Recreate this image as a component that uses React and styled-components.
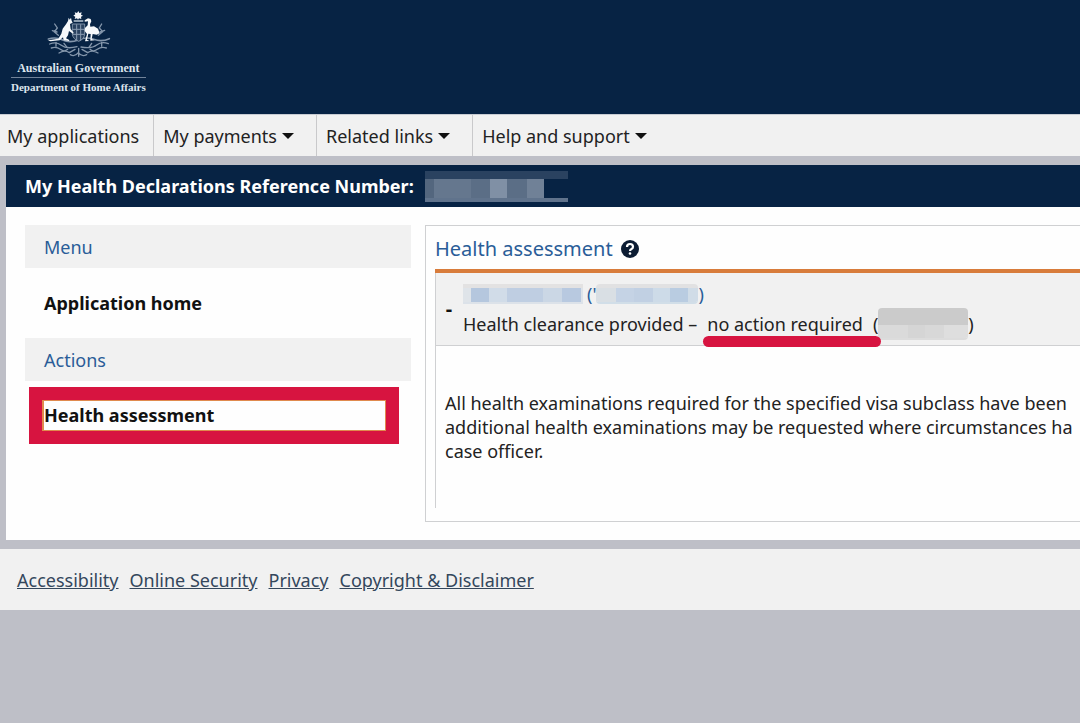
import React from "react";
import styled, { createGlobalStyle } from "styled-components";

const navy = "#072344";
const blue = "#2a5d98";
const red = "#d71440";
const pale = "#f1f1f1";

const GlobalStyle = createGlobalStyle`
  * { box-sizing: border-box; }
  body {
    margin: 0;
    background: #bebfc7;
    color: #222;
    font-family: "Noto Sans", "Open Sans", sans-serif;
    font-size: 18px;
    line-height: 24px;
    overflow-x: hidden;
  }
`;

const Header = styled.header`
  display: flex;
  padding: 10px 11px 18px;
  background: ${navy};
`;

const Brand = styled.div`
  display: flex;
  flex-direction: column;
  align-items: center;
  color: #dde5ee;
  font: bold 11px/18px "Liberation Serif", serif;
  white-space: nowrap;
`;

const BrandLine = styled.span`
  width: 100%;
  text-align: center;
  font-size: ${(p) => (p.$ruled ? 12 : 11)}px;
  border-bottom: ${(p) => (p.$ruled ? "1px solid #71839a" : "0")};
`;

const Nav = styled.nav`
  display: flex;
  height: 42px;
  background: ${pale};
  border-top: 1px solid #c8ccd3;
`;

const navItem = `
  display: flex;
  align-items: center;
  gap: 5px;
  border: 0;
  background: none;
  color: #222;
  font: inherit;
  text-decoration: none;
  white-space: nowrap;
`;

const NavLink = styled.a`
  ${navItem}
  padding: 0 14px 0 7px;
`;

const NavButton = styled.button`
  ${navItem}
  padding: 0 22px 0 9px;
  border-left: 1px solid #c9c9cb;
`;

const Caret = styled.span`
  border: 6px solid transparent;
  border-top-color: #111;
  border-bottom: 0;
`;

const Main = styled.main`
  margin: 9px 0 9px 6px;
  background: #fefefe;
`;

const TitleBar = styled.div`
  display: flex;
  align-items: center;
  gap: 11px;
  height: 42px;
  padding-left: 19px;
  background: ${navy};
`;

const Title = styled.h1`
  margin: 0;
  color: #fff;
  font-size: 18px;
  line-height: 24px;
  white-space: nowrap;
`;

const Columns = styled.div`
  display: flex;
  gap: 14px;
  padding: 18px 0 18px 19px;
`;

const Sidebar = styled.nav`
  flex: 0 0 386px;
`;

const MenuHeading = styled.h2`
  margin: 0;
  padding: 10px 19px 9px;
  background: ${pale};
  color: ${blue};
  font-size: 18px;
  font-weight: 400;
  line-height: 24px;
`;

const MenuLink = styled.a`
  display: block;
  padding: 23px 19px;
  color: #111;
  font-weight: 700;
  text-decoration: none;
`;

const Highlight = styled.div`
  margin: 6px 12px 0 4px;
  border: 13px solid ${red};
`;

const ActiveLink = styled.a`
  display: block;
  padding: 2px 0 3px;
  border: 1px solid #e08a4e;
  border-left-width: 2px;
  color: #111;
  font-weight: 700;
  text-decoration: none;
`;

const Panel = styled.section`
  flex: 1;
  min-width: 0;
  padding: 11px 0 13px 9px;
  border: 1px solid #cfd0d2;
  border-right: 0;
  overflow: hidden;
`;

const PanelHeading = styled.h2`
  display: flex;
  align-items: center;
  gap: 8px;
  margin: 0;
  padding-bottom: 8px;
  border-bottom: 4px solid #d87c3b;
  color: ${blue};
  font-size: 20px;
  font-weight: 400;
  line-height: 24px;
`;

const HelpButton = styled.button`
  display: flex;
  padding: 0;
  border: 0;
  background: none;
`;

const Record = styled.div`
  border-left: 1px solid #cfd0d2;
`;

const RecordHead = styled.div`
  display: flex;
  align-items: center;
  gap: 10px;
  height: 73px;
  padding: 0 0 1px 9px;
  background: ${pale};
  border-bottom: 1px solid #cfd0d2;
`;

const Toggle = styled.button`
  width: 8px;
  padding: 0;
  border: 0;
  background: none;
  color: #111;
  font: bold 20px/24px "Noto Sans", sans-serif;
`;

const RecordInfo = styled.div`
  display: flex;
  flex-direction: column;
  gap: 4px;
  white-space: nowrap;
`;

const Line = styled.div`
  display: flex;
  align-items: center;
  height: 26px;
  color: ${(p) => (p.$link ? blue : "#222")};
`;

const Marked = styled.span`
  position: relative;
  margin: 0 10px;

  &::after {
    content: "";
    position: absolute;
    left: -4px;
    right: -18px;
    top: 24px;
    height: 11px;
    border-radius: 6px;
    background: ${red};
  }
`;

const Reference = styled.span`
  margin-left: 4px;
`;

const Mosaic = styled.span`
  display: flex;
  flex: none;
  height: ${(p) => p.$height}px;
  border-top: ${(p) => p.$top};
  border-bottom: ${(p) => p.$bottom};
  border-radius: ${(p) => p.$radius || 0}px;
  overflow: hidden;
`;

const Tile = styled.span`
  width: ${(p) => p.$width}px;
  background: ${(p) => p.$tone};
`;

const Text = styled.p`
  margin: 0;
  padding: 45px 0 45px 9px;
  height: 162px;
  white-space: pre;
`;

const Footer = styled.footer`
  display: flex;
  gap: 11px;
  padding: 19px 17px 18px;
  background: ${pale};
`;

const FooterLink = styled.a`
  color: #34475c;
  white-space: nowrap;
`;

function Redacted({ tiles, ...rest }) {
  return (
    <Mosaic {...rest} aria-hidden="true">
      {tiles.map(([tone, width], i) => (
        <Tile key={i} $tone={tone} $width={width} />
      ))}
    </Mosaic>
  );
}

const numberTiles = [
  ["#53667e", 9], ["#65778e", 37], ["#5b6e86", 19], ["#8090a5", 17],
  ["#5b6e86", 20], ["#708197", 17], [navy, 24],
];
const nameTiles = [
  ["#dfe4e9", 8], ["#b5c7de", 18], ["#d1dce8", 18], ["#bfcee2", 36],
  ["#cbd7e5", 19], ["#b8c9e0", 19], ["#dde3e9", 2],
];
const idTiles = [
  ["#d9dfe4", 20], ["#c5d3e5", 18], ["#c1d0e3", 19], ["#cddbe8", 17],
  ["#b9cce1", 18], ["#d0dce7", 10],
];
const dateTiles = [
  ["#dadada", 30], ["#d5d5d5", 17], ["#d8d8d8", 19], ["#dedede", 24],
];

function Crest() {
  return (
    <svg width="68" height="49" viewBox="133 30 204 147" aria-hidden="true">
      <g fill="none" stroke="#8496ab" strokeWidth="4" strokeLinecap="round">
        <path d="M165 72l8 12-9 12 12 10M158 92l14 4M306 72l-7 12 10 11-13 11M315 91l-14 5" />
        <path d="M146 117q22-7 43 3t47 0q22-11 46-2t47-2" strokeWidth="5" />
        <path d="M150 132q20-8 35 4t47 4M326 131q-20-8-35 4t-47 6" />
        <path d="M155 144q15-5 27 4t22 0M320 144q-15-5-27 4t-22 0M178 159q17-11 31-1l17-10M295 159q-17-11-31-1l-17-10" />
        <path d="M193 130l9 12M276 130l-8 12M169 127v12M306 127v12" />
        <path d="M212 164q13 8 24-6 10 14 25 6M237 145v24" />
      </g>
      <path d="M218 72h37v31q-2 15-18 21-17-7-19-21z" fill="#29415f" stroke="#7e91a7" strokeWidth="3" />
      <path d="M218 88h37M231 73v48M243 73v48M219 103h35" stroke="#8b9db2" strokeWidth="3" />
      <path d="M222 63h29" stroke="#a9b7c7" strokeWidth="5" />
      <path d="M236 33l3 6 7-2-2 7 6 3-6 3 1 7-7-2-3 4-3-4-7 2 2-7-6-3 6-4-2-6 7 2z" fill="#f5f8fb" />
      <path d="M207 53l3 6 4-6 2 9 3 6-8 4 2 15 9 11-2 3-12-8-3 13-6 9 10 5-1 3-16-2-2-9-10 9-28 3-7-3 31-5 9-15 4-15 10-13 6-10z" fill="#f7f9fb" />
      <path d="M255 61l10-6 8 2 2 7-4 9 1 7 11-1 12 7 5 14-9 4-12-2-3 15 9 4-13 1 1-20-7-1-4 18 7 4-13 1 6-22-7-9 1-9 8-8 1-12-10 1z" fill="#f7f9fb" />
    </svg>
  );
}

export default function App() {
  return (
    <>
      <GlobalStyle />
      <Header>
        <Brand>
          <Crest />
          <BrandLine $ruled>Australian Government</BrandLine>
          <BrandLine>Department of Home Affairs</BrandLine>
        </Brand>
      </Header>
      <Nav aria-label="Main">
        <NavLink href="#applications">My applications</NavLink>
        {["My payments", "Related links", "Help and support"].map((label) => (
          <NavButton key={label} type="button">
            {label}
            <Caret />
          </NavButton>
        ))}
      </Nav>
      <Main>
        <TitleBar>
          <Title>My Health Declarations Reference Number:</Title>
          <Redacted
            $height={31}
            $top="8px solid #2a4260"
            $bottom="4px solid #60738c"
            tiles={numberTiles}
          />
        </TitleBar>
        <Columns>
          <Sidebar aria-label="Application">
            <MenuHeading>Menu</MenuHeading>
            <MenuLink href="#home">Application home</MenuLink>
            <MenuHeading>Actions</MenuHeading>
            <Highlight>
              <ActiveLink href="#health">Health assessment</ActiveLink>
            </Highlight>
          </Sidebar>
          <Panel>
            <PanelHeading>
              Health assessment
              <HelpButton type="button" aria-label="Help">
                <svg width="18" height="18" viewBox="0 0 18 18">
                  <circle cx="9" cy="9" r="9" fill="#0c1c33" />
                  <path d="M6 7q0-3 3-3t3 2.700q0 1.500-1.500 2.200T9 11" fill="none" stroke="#fff" strokeWidth="2.200" />
                  <circle cx="9" cy="13.500" r="1.300" fill="#fff" />
                </svg>
              </HelpButton>
            </PanelHeading>
            <Record>
              <RecordHead>
                <Toggle type="button" aria-label="Collapse">-</Toggle>
                <RecordInfo>
                  <Line $link>
                    <Redacted
                      $height={20}
                      $top="4px solid #e3e2e2"
                      $bottom="2px solid #dce2e9"
                      tiles={nameTiles}
                    />
                    <Reference>('</Reference>
                    <Redacted
                      $height={20}
                      $top="4px solid #e1e1e2"
                      $bottom="2px solid #d1dee8"
                      $radius={4}
                      tiles={idTiles}
                    />
                    )
                  </Line>
                  <Line>
                    Health clearance provided –<Marked>no action required</Marked>
                    (
                    <Redacted
                      $height={32}
                      $top="17px solid #cbcbcb"
                      $bottom="2px solid #dcdcdc"
                      $radius={4}
                      tiles={dateTiles}
                    />
                    )
                  </Line>
                </RecordInfo>
              </RecordHead>
              <Text>
                {"All health examinations required for the specified visa subclass have been\nadditional health examinations may be requested where circumstances ha\ncase officer."}
              </Text>
            </Record>
          </Panel>
        </Columns>
      </Main>
      <Footer>
        <FooterLink href="#accessibility">Accessibility</FooterLink>
        <FooterLink href="#security">Online Security</FooterLink>
        <FooterLink href="#privacy">Privacy</FooterLink>
        <FooterLink href="#copyright">Copyright &amp; Disclaimer</FooterLink>
      </Footer>
    </>
  );
}
